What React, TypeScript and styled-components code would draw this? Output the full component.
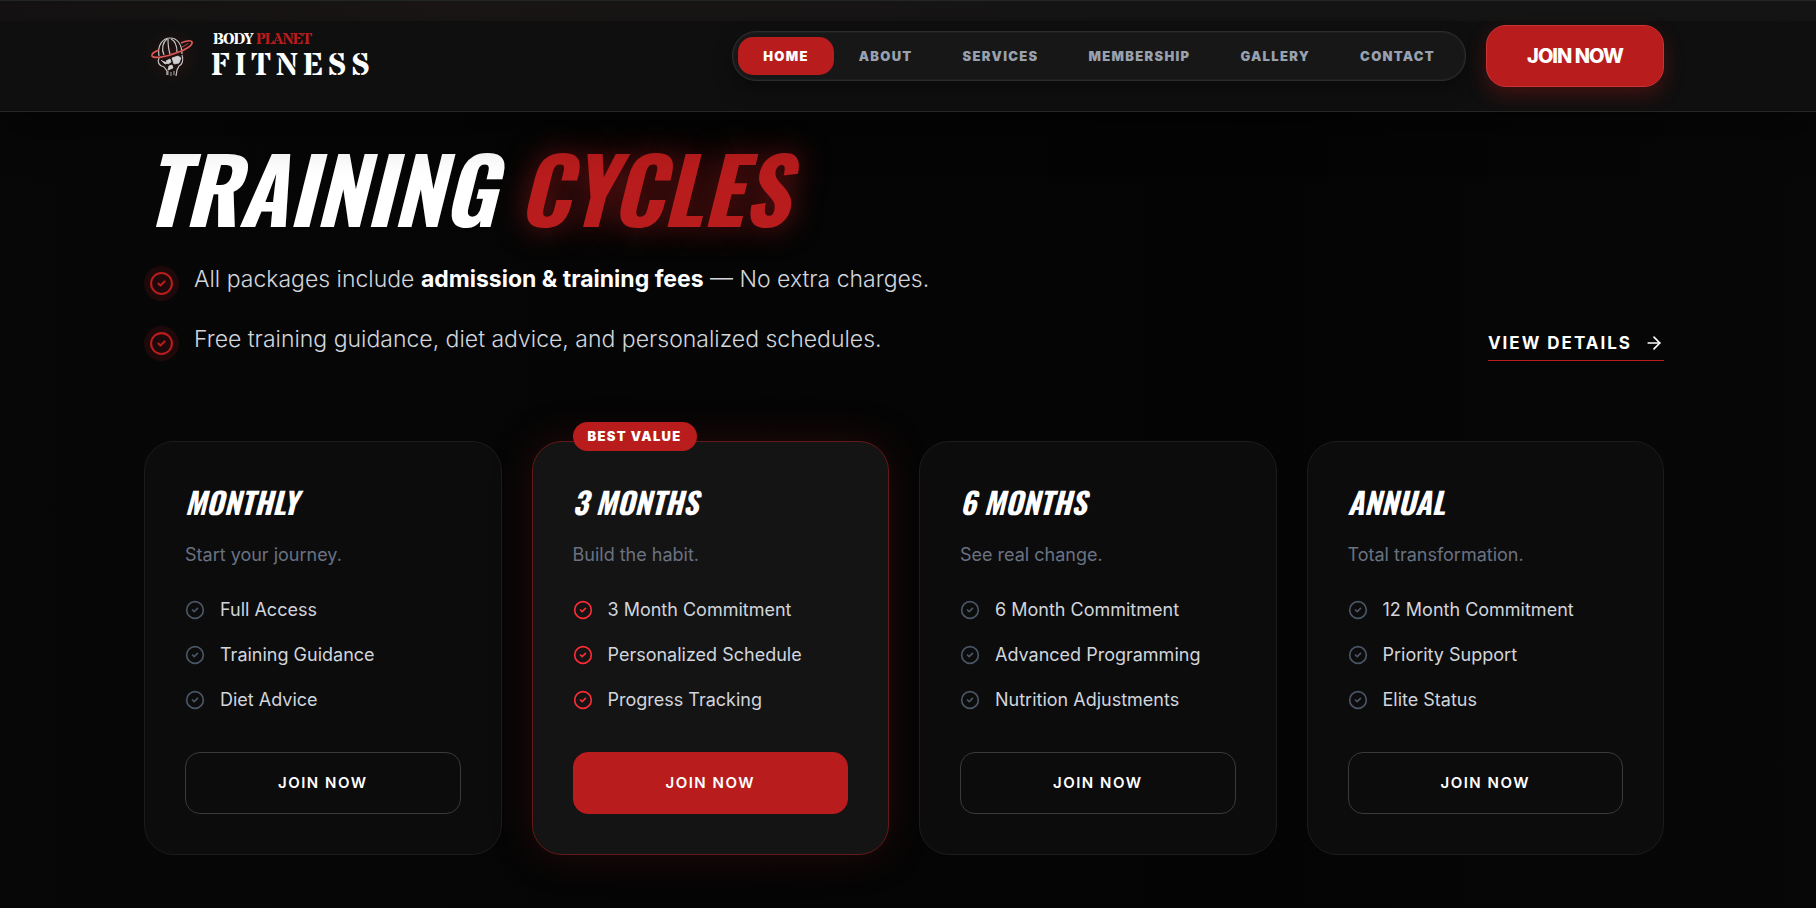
import React from "react";
import styled, { createGlobalStyle, css } from "styled-components";
import { ArrowRight, CircleCheck } from "lucide-react";

const red = "#b91c1c";
const display = `Oswald, "Roboto Condensed", Roboto, sans-serif`;

const GlobalStyle = createGlobalStyle`
  *, *::before, *::after { box-sizing: border-box; }
  body {
    margin: 0;
    min-height: 100vh;
    background: #050505;
    color: #fff;
    font-family: Inter, "Liberation Sans", sans-serif;
  }
  h1, h2, h3, p, ul { margin: 0; padding: 0; }
  ul { list-style: none; }
  a { color: inherit; text-decoration: none; }
`;

const Page = styled.div`
  min-height: 100vh;
  background: linear-gradient(90deg, #070707, #050505 30%, #040404 70%, #070707);
`;

const TopStrip = styled.div`
  height: 21px;
  border-top: 1px solid #232827;
  background: linear-gradient(90deg, #141212, #191615 25%, #161515 60%, #151515);
`;

const Header = styled.header`
  position: relative;
  z-index: 1;
  background: #0f0f0f;
  border-bottom: 1px solid #262626;
  padding: 4px 8px 24px 0;
  box-shadow: 0 20px 40px rgba(0, 0, 0, 0.4);
`;

const Container = styled.div`
  width: calc(100% - 48px);
  max-width: 1520px;
  margin: 0 auto;
`;

const HeaderRow = styled(Container)`
  display: flex;
  align-items: center;
  gap: 20px;
`;

const Brand = styled.a`
  display: flex;
  align-items: center;
  gap: 11px;
  margin-right: auto;
`;

const LogoMark = styled.svg`
  width: 56px;
  height: 56px;
  border-radius: 50%;
  background: radial-gradient(closest-side, rgba(127, 29, 29, 0.22), transparent);
`;

const BrandText = styled.span`
  display: flex;
  flex-direction: column;
  padding-top: 4px;
  font-family: "Stardos Stencil", "Liberation Serif", serif;
  font-weight: 700;
`;

const BrandTop = styled.span`
  padding-left: 2px;
  font-size: 16px;
  line-height: 18px;
  letter-spacing: -1px;
  em { font-style: normal; color: ${red}; }
`;

const BrandBottom = styled.span`
  font-size: 31px;
  line-height: 38px;
  letter-spacing: 5px;
`;

const Nav = styled.nav`
  display: flex;
  padding: 5px;
  border: 1px solid #2c2c2c;
  border-radius: 24px;
  background: #171717;
  box-shadow: inset 0 0 2px rgba(255, 255, 255, 0.12), 0 8px 20px rgba(0, 0, 0, 0.35);
`;

const NavLink = styled.a<{ $active?: boolean }>`
  padding: 0 25px;
  border-radius: 15px;
  font-size: 13px;
  line-height: 38px;
  font-weight: 900;
  letter-spacing: 0.1em;
  color: ${(p) => (p.$active ? "#fff" : "#99a1af")};
  background: ${(p) => (p.$active ? red : "transparent")};
`;

const HeaderButton = styled.button`
  height: 62px;
  padding: 0 40px;
  border: 1px solid #cb3333;
  border-radius: 20px;
  background: ${red};
  color: #fff;
  font: 800 20px/28px Inter, sans-serif;
  letter-spacing: -1px;
  box-shadow: 0 8px 20px rgba(185, 28, 28, 0.3);
`;

const Main = styled.main`
  padding: 37px 8px 52px 0;
`;

const Title = styled.h1`
  font: italic 700 90px/76px ${display};
  span {
    color: ${red};
    text-shadow: 0 0 30px rgba(185, 28, 28, 0.6);
  }
`;

const Intro = styled.div`
  display: flex;
  justify-content: space-between;
  align-items: flex-end;
  margin: 41px 0 80px;
`;

const Points = styled.ul`
  display: grid;
  gap: 25px;
`;

const Point = styled.li`
  display: flex;
  gap: 15px;
  height: 35px;
  color: #d1d5dc;
  font-size: 23px;
  line-height: 26px;
  font-weight: 300;
  strong { font-weight: 700; color: #fff; }
`;

const PointIcon = styled.span`
  display: grid;
  place-items: center;
  width: 35px;
  height: 35px;
  border-radius: 50%;
  background: rgba(185, 28, 28, 0.13);
  color: ${red};
`;

const DetailsLink = styled.a`
  display: flex;
  align-items: center;
  gap: 12px;
  height: 36px;
  border-bottom: 1px solid ${red};
  font-size: 17px;
  font-weight: 700;
  letter-spacing: 2px;
`;

const Plans = styled.section`
  display: grid;
  grid-template-columns: repeat(4, 1fr);
  gap: 30px;
`;

const Card = styled.article<{ $featured?: boolean }>`
  position: relative;
  display: flex;
  flex-direction: column;
  padding: 40px;
  border: 1px solid #1c1c1c;
  border-radius: 30px;
  background: #0c0c0c;
  ${(p) =>
    p.$featured &&
    css`
      border-color: #641818;
      background: #141414;
      box-shadow: 0 0 40px rgba(127, 29, 29, 0.25);
    `}
`;

const Badge = styled.span`
  position: absolute;
  top: -20px;
  left: 40px;
  padding: 0 15px;
  border-radius: 15px;
  background: ${red};
  font-size: 13px;
  line-height: 29px;
  font-weight: 900;
  letter-spacing: 0.1em;
`;

const PlanName = styled.h2`
  font: italic 700 30px/39px ${display};
`;

const PlanNote = styled.p`
  margin-top: 20px;
  color: #6a7282;
  font-size: 18px;
  line-height: 28px;
`;

const Features = styled.ul<{ $featured?: boolean }>`
  display: grid;
  gap: 17px;
  margin: 27px 0 38px;
  svg { color: ${(p) => (p.$featured ? "#fb2c36" : "#4a5565")}; }
`;

const Feature = styled.li`
  display: flex;
  align-items: center;
  gap: 15px;
  color: #d1d5dc;
  font-size: 18px;
  line-height: 28px;
`;

const PlanButton = styled.button<{ $featured?: boolean }>`
  height: 62px;
  border: 1px solid ${(p) => (p.$featured ? red : "#3a3a3a")};
  border-radius: 15px;
  background: ${(p) => (p.$featured ? red : "transparent")};
  color: #fff;
  font: 600 15px/24px Inter, sans-serif;
  letter-spacing: 0.1em;
`;

const links = ["HOME", "ABOUT", "SERVICES", "MEMBERSHIP", "GALLERY", "CONTACT"];

const plans = [
  { name: "MONTHLY", note: "Start your journey.", features: ["Full Access", "Training Guidance", "Diet Advice"] },
  {
    name: "3 MONTHS",
    note: "Build the habit.",
    features: ["3 Month Commitment", "Personalized Schedule", "Progress Tracking"],
    featured: true,
  },
  {
    name: "6 MONTHS",
    note: "See real change.",
    features: ["6 Month Commitment", "Advanced Programming", "Nutrition Adjustments"],
  },
  {
    name: "ANNUAL",
    note: "Total transformation.",
    features: ["12 Month Commitment", "Priority Support", "Elite Status"],
  },
];

function Logo() {
  return (
    <LogoMark viewBox="0 0 56 56" fill="none" aria-hidden="true">
      <g stroke="#c4c4c4" strokeWidth="1.2">
        <path d="M15 28c-2-11 4-18 11-18s12 6 12 16" />
        <path d="M20 27c-3-6-1-13 3-16M26 26c-2-6-2-12-2-15M33 24c0-6-2-11-6-13" />
        <path d="M15 30c-2 4 0 8 5 9l3 4v4M38 27c2 5 0 10-3 11l-2 4-1 6" />
      </g>
      <path d="M17 32l4 4 3-1M28 30l6-2 3 2-2 5-5 1zM22 33l4-2 1 3-3 2zM25 38l3-1 1 3-5 2zM24 43v4M27 44v4M30 43v4" fill="#d0d0d0" stroke="#d0d0d0" strokeWidth="0.8" />
      <path d="M15 22c-5 2-8 4-7 6 2 3 14 1 24-3 10-3 17-8 16-11-1-2-6-1-11 1" stroke="#dc5652" strokeWidth="1.8" />
      <path d="M38 19c4-2 6-3 6-4" stroke="#dc5652" strokeWidth="1" />
    </LogoMark>
  );
}

export default function App() {
  return (
    <Page>
      <GlobalStyle />
      <TopStrip />
      <Header>
        <HeaderRow>
          <Brand href="#home">
            <Logo />
            <BrandText>
              <BrandTop>BODY <em>PLANET</em></BrandTop>
              <BrandBottom>FITNESS</BrandBottom>
            </BrandText>
          </Brand>
          <Nav>
            {links.map((label, i) => (
              <NavLink key={label} href={`#${label.toLowerCase()}`} $active={i === 0}>{label}</NavLink>
            ))}
          </Nav>
          <HeaderButton>JOIN NOW</HeaderButton>
        </HeaderRow>
      </Header>
      <Main>
        <Container>
          <Title>TRAINING <span>CYCLES</span></Title>
          <Intro>
            <Points>
              <Point>
                <PointIcon><CircleCheck size={25} /></PointIcon>
                <p>All packages include <strong>admission &amp; training fees</strong> — No extra charges.</p>
              </Point>
              <Point>
                <PointIcon><CircleCheck size={25} /></PointIcon>
                <p>Free training guidance, diet advice, and personalized schedules.</p>
              </Point>
            </Points>
            <DetailsLink href="#membership">VIEW DETAILS <ArrowRight size={20} /></DetailsLink>
          </Intro>
          <Plans>
            {plans.map((plan) => (
              <Card key={plan.name} $featured={plan.featured}>
                {plan.featured && <Badge>BEST VALUE</Badge>}
                <PlanName>{plan.name}</PlanName>
                <PlanNote>{plan.note}</PlanNote>
                <Features $featured={plan.featured}>
                  {plan.features.map((feature) => (
                    <Feature key={feature}><CircleCheck size={20} />{feature}</Feature>
                  ))}
                </Features>
                <PlanButton $featured={plan.featured}>JOIN NOW</PlanButton>
              </Card>
            ))}
          </Plans>
        </Container>
      </Main>
    </Page>
  );
}
